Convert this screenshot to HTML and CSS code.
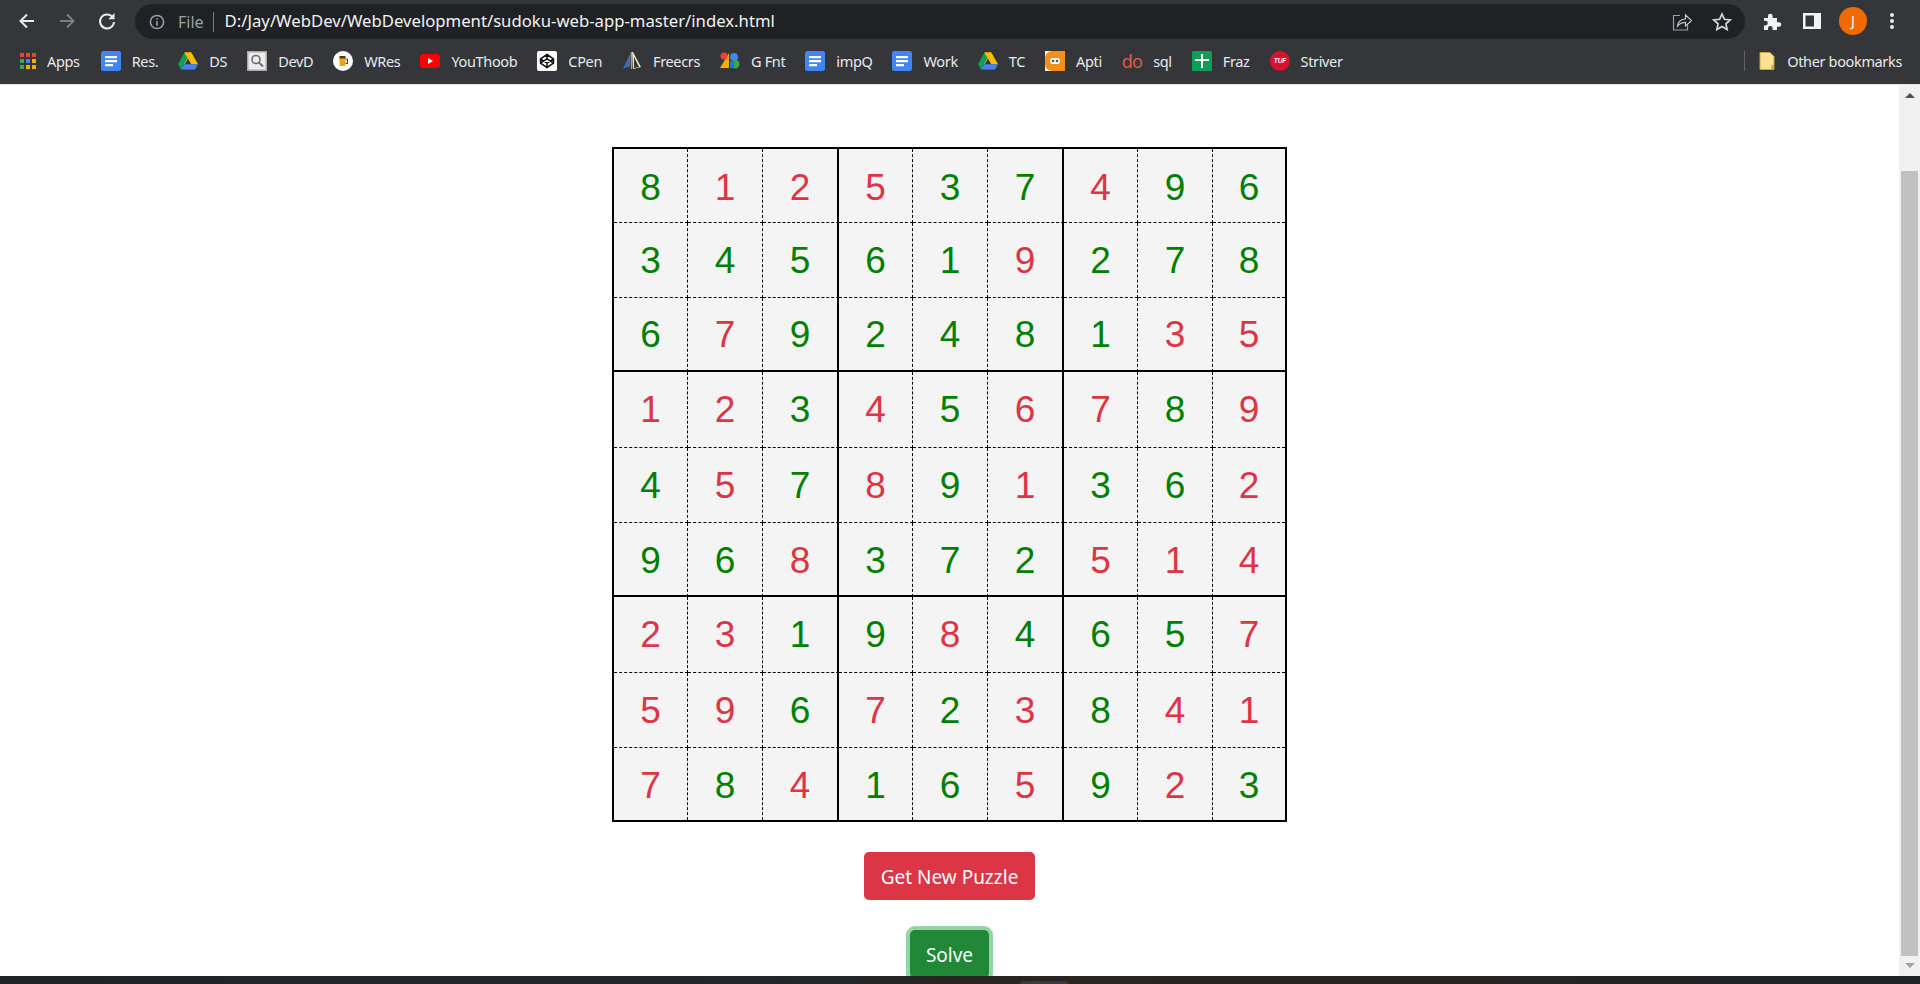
FILE: index.html
```html
<!doctype html>
<html lang="en">
  <head>
    <meta charset="utf-8">
    <meta name="viewport" content="width=device-width, initial-scale=1">
    <title>Sudoku</title>
    <link rel="stylesheet" href="styles.css">
  </head>
  <body>
    <svg class="defs" width="0" height="0">
      <symbol id="docs" viewBox="0 0 20 20">
        <rect width="20" height="20" rx="2.5" fill="#4285f4"/>
        <path d="M4 5h12v2.2H4zM4 9h12v2.2H4zM4 13h8v2.2H4z" fill="#fff"/>
      </symbol>
      <symbol id="drive" viewBox="0 0 20 20">
        <path d="M6.6 1.5h6.8l-3.4 6-3.4 6.2-3.3-0.1z" fill="#fbbc04"/>
        <path d="M6.6 1.5L0 13.2l3 5.3 6.6-11.5z" fill="#0f9d58"/>
        <path d="M13.4 1.5L20 13.2h-6.7L6.6 1.5z" fill="#fbbc04"/>
        <path d="M3 18.5h14l3-5.3H6.2z" fill="#4285f4"/>
      </symbol>
    </svg>

    <header class="chrome">
      <div class="nav-row">
        <svg class="nav-icon" viewBox="0 0 20 20"><path d="M17 10H4M10 3.5L3.5 10l6.5 6.5" fill="none" stroke="#e8eaed" stroke-width="2"/></svg>
        <svg class="nav-icon" viewBox="0 0 20 20"><path d="M3 10h13M10 3.5l6.5 6.5-6.5 6.5" fill="none" stroke="#7d7f83" stroke-width="2"/></svg>
        <svg class="nav-icon" viewBox="0 0 20 20"><path d="M15.6 6.2A7 7 0 1 0 17 11" fill="none" stroke="#e8eaed" stroke-width="2"/><path d="M17.5 2v6.2h-6.2z" fill="#e8eaed"/></svg>
        <div class="omnibox">
          <svg class="info-icon" viewBox="0 0 16 16"><circle cx="8" cy="8" r="6.6" fill="none" stroke="#9aa0a6" stroke-width="1.5"/><path d="M7.2 7h1.6v4.8H7.2zM7.2 4.2h1.6v1.6H7.2z" fill="#9aa0a6"/></svg>
          <span class="scheme">File</span>
          <span class="url">D:/Jay/WebDev/WebDevelopment/sudoku-web-app-master/index.html</span>
          <svg class="omni-icon share" viewBox="0 0 20 20"><path d="M8 3.5H1.5v14.5h14v-5" fill="none" stroke="#9aa0a6" stroke-width="1.2"/><path d="M5.5 14c.6-4 3.6-6.8 8-7V3l6 5.6-6 5.4v-3.600c-3.200 0-5.800 1-8 3.600z" fill="none" stroke="#c4c7ca" stroke-width="1.2"/></svg>
          <svg class="omni-icon" viewBox="0 0 20 20"><path d="M10 2l2.400 5.300 5.800.6-4.300 3.900 1.200 5.700L10 14.600l-5.100 2.900 1.200-5.700L1.800 7.900l5.800-.6z" fill="none" stroke="#d5d7d9" stroke-width="1.700"/></svg>
        </div>
        <svg class="tool-icon puzzle" viewBox="0 0 20 20"><path d="M2 7h4V5a2.300 2.300 0 0 1 4.600 0v2h4.400v4.200h2a2.300 2.300 0 0 1 0 4.600h-2V19h-4.400v-1.600a2.300 2.300 0 0 0-4.600 0V19H2v-4.600h1.500a2.300 2.300 0 0 0 0-4.600H2z" fill="#f1f3f4"/></svg>
        <svg class="tool-icon panel" viewBox="0 0 20 20"><path d="M1 2h18v16H1zM3.500 4.500v11H12v-11z" fill="#f1f3f4" fill-rule="evenodd"/></svg>
        <div class="avatar">J</div>
        <svg class="tool-icon menu" viewBox="0 0 6 20"><circle cx="3" cy="4" r="2" fill="#e8eaed"/><circle cx="3" cy="10" r="2" fill="#e8eaed"/><circle cx="3" cy="16" r="2" fill="#e8eaed"/></svg>
      </div>
      <nav class="bookmarks">
        <a class="bm"><svg class="apps" viewBox="0 0 16 16"><path d="M0 0h4v4H0zM6 0h4v4H6zM12 0h4v4h-4z" fill="#ea4335"/><path d="M0 6h4v4H0zM0 12h4v4H0z" fill="#34a853"/><path d="M6 6h4v4H6z" fill="#4285f4"/><path d="M12 6h4v4h-4zM6 12h4v4H6zM12 12h4v4h-4z" fill="#f9ab00"/></svg>Apps</a>
        <a class="bm"><svg><use href="#docs"/></svg>Res.</a>
        <a class="bm"><svg><use href="#drive"/></svg>DS</a>
        <a class="bm"><svg viewBox="0 0 20 20"><rect width="20" height="20" fill="#a9a9a9"/><rect x="1.500" y="1.500" width="17" height="17" fill="#ececec"/><circle cx="9" cy="8.500" r="4" fill="none" stroke="#6e6e6e" stroke-width="1.600"/><path d="M12 11.500l4 4" stroke="#6e6e6e" stroke-width="2"/></svg>DevD</a>
        <a class="bm"><svg viewBox="0 0 20 20"><circle cx="10" cy="10" r="10" fill="#fff"/><rect x="6.500" y="6" width="6" height="9" rx="1" fill="#e8a317"/><rect x="6.500" y="5" width="6" height="2.500" fill="#4b3a1a"/><path d="M12.500 8h2v4.500h-2" fill="none" stroke="#4b3a1a" stroke-width="1"/></svg>WRes</a>
        <a class="bm"><svg viewBox="0 0 20 20"><rect y="3" width="20" height="14" rx="3.500" fill="#f00"/><path d="M8 7l5 3-5 3z" fill="#fff"/></svg>YouThoob</a>
        <a class="bm"><svg viewBox="0 0 20 20"><rect width="20" height="20" rx="2" fill="#fff"/><path d="M10 3.500l6.500 4.300v4.400L10 16.500l-6.500-4.300V7.800zM3.500 7.800l6.500 4.300 6.500-4.300M3.500 12.200L10 7.900l6.500 4.300M10 3.500v4.400M10 12.100v4.400" fill="none" stroke="#111" stroke-width="1.500"/></svg>CPen</a>
        <a class="bm"><svg viewBox="0 0 20 20"><path d="M9 1L1 17.500l7-2z" fill="#3d6cb0"/><path d="M10 1l1 0 8 15-8 2z" fill="#e8e2c4"/><path d="M9.500 1v17" stroke="#e09a2b" stroke-width="1.200"/><path d="M12 6l5 10-5 1z" fill="#35363a"/></svg>Freecrs</a>
        <a class="bm gfont"><svg viewBox="0 0 20 20"><path d="M0 17L9 2v15z" fill="#f9ab00"/><circle cx="4" cy="5" r="3.500" fill="#ea4335"/><rect x="10" y="2" width="8" height="8" rx="4" fill="#4285f4"/><circle cx="15" cy="13" r="4.500" fill="#34a853"/><path d="M10 10h4v7h-4z" fill="#1a73e8"/></svg>G Fnt</a>
        <a class="bm"><svg><use href="#docs"/></svg>impQ</a>
        <a class="bm"><svg><use href="#docs"/></svg>Work</a>
        <a class="bm"><svg><use href="#drive"/></svg>TC</a>
        <a class="bm"><svg viewBox="0 0 20 20"><rect width="20" height="20" fill="#fff"/><path d="M20 0H7a7 7 0 0 0-7 7v6a7 7 0 0 0 7 7h13v-4H7a3 3 0 0 1-3-3V7a3 3 0 0 1 3-3h13z" fill="#f39019"/><rect x="3" y="3.500" width="17" height="13" fill="#f39019"/><rect x="5" y="7" width="10" height="6" rx="3" fill="#fff"/><circle cx="8" cy="10" r="1.300" fill="#555"/><circle cx="12" cy="10" r="1.300" fill="#555"/></svg>Apti</a>
        <a class="bm"><span class="do-mark">do</span>sql</a>
        <a class="bm"><svg viewBox="0 0 20 20"><rect width="20" height="20" rx="1.500" fill="#0f9d58"/><path d="M9 3h2v5h6v2h-6v7H9v-7H3V8h6z" fill="#fff"/></svg>Fraz</a>
        <a class="bm"><svg viewBox="0 0 20 20"><circle cx="10" cy="10" r="10" fill="#d9112c"/><text class="tuf" x="10" y="12.300">TUF</text></svg>Striver</a>
        <div class="bm-spacer"></div>
        <a class="bm other"><svg viewBox="0 0 16 20"><path d="M1 1.500h10l4 4v13H1z" fill="#fde293" stroke="#c9a73a"/><path d="M12.500 14h2.500v4.500h-2.500z" fill="#c9a73a"/></svg>Other bookmarks</a>
      </nav>
    </header>

    <div class="page">
      <main class="content">
        <div class="board">
          <div class="cell good">8</div><div class="cell bad">1</div><div class="cell bad">2</div><div class="cell bad">5</div><div class="cell good">3</div><div class="cell good">7</div><div class="cell bad">4</div><div class="cell good">9</div><div class="cell good">6</div>
          <div class="cell good">3</div><div class="cell good">4</div><div class="cell good">5</div><div class="cell good">6</div><div class="cell good">1</div><div class="cell bad">9</div><div class="cell good">2</div><div class="cell good">7</div><div class="cell good">8</div>
          <div class="cell good">6</div><div class="cell bad">7</div><div class="cell good">9</div><div class="cell good">2</div><div class="cell good">4</div><div class="cell good">8</div><div class="cell good">1</div><div class="cell bad">3</div><div class="cell bad">5</div>
          <div class="cell bad">1</div><div class="cell bad">2</div><div class="cell good">3</div><div class="cell bad">4</div><div class="cell good">5</div><div class="cell bad">6</div><div class="cell bad">7</div><div class="cell good">8</div><div class="cell bad">9</div>
          <div class="cell good">4</div><div class="cell bad">5</div><div class="cell good">7</div><div class="cell bad">8</div><div class="cell good">9</div><div class="cell bad">1</div><div class="cell good">3</div><div class="cell good">6</div><div class="cell bad">2</div>
          <div class="cell good">9</div><div class="cell good">6</div><div class="cell bad">8</div><div class="cell good">3</div><div class="cell good">7</div><div class="cell good">2</div><div class="cell bad">5</div><div class="cell bad">1</div><div class="cell bad">4</div>
          <div class="cell bad">2</div><div class="cell bad">3</div><div class="cell good">1</div><div class="cell good">9</div><div class="cell bad">8</div><div class="cell good">4</div><div class="cell good">6</div><div class="cell good">5</div><div class="cell bad">7</div>
          <div class="cell bad">5</div><div class="cell bad">9</div><div class="cell good">6</div><div class="cell bad">7</div><div class="cell good">2</div><div class="cell bad">3</div><div class="cell good">8</div><div class="cell bad">4</div><div class="cell bad">1</div>
          <div class="cell bad">7</div><div class="cell good">8</div><div class="cell bad">4</div><div class="cell good">1</div><div class="cell good">6</div><div class="cell bad">5</div><div class="cell good">9</div><div class="cell bad">2</div><div class="cell good">3</div>
        </div>
        <button type="button" class="btn btn-new">Get New Puzzle</button>
        <button type="button" class="btn btn-solve">Solve</button>
      </main>
      <div class="scrollbar">
        <span class="arrow-up"></span>
        <div class="thumb"></div>
        <span class="arrow-down"></span>
      </div>
    </div>
    <div class="taskbar"><span class="task-tab"></span></div>
  </body>
</html>
```

FILE: styles.css
```css
html,body{
    margin:0;
    height:100%;
    overflow:hidden;
    background-color:white;
}
body{
    display:flex;
    flex-direction:column;
    font-family:"Noto Sans","Open Sans",Arial,sans-serif;
}
.defs{
    display:block;
    height:0;
}

/* browser toolbar */
.chrome{
    height:84px;
    flex:none;
    background-color:#35363a;
    color:#e8eaed;
}
.nav-row{
    height:41px;
    display:flex;
    align-items:flex-start;
    padding-top:4px;
    box-sizing:border-box;
}
.nav-icon{
    width:20px;
    height:20px;
    margin:7px 0 0 17px;
    flex:none;
}
.nav-icon + .nav-icon{
    margin-left:20px;
}
.omnibox{
    width:1610px;
    height:35px;
    margin-left:18px;
    flex:none;
    display:flex;
    align-items:center;
    background-color:#202124;
    border-radius:18px;
    padding:0 13px 0 14px;
    box-sizing:border-box;
}
.info-icon{
    width:16px;
    height:16px;
    flex:none;
}
.scheme{
    margin-left:13px;
    padding-right:9px;
    border-right:1px solid #7d7f83;
    font-size:16px;
    line-height:20px;
    color:#9aa0a6;
}
.url{
    margin-left:11px;
    margin-top:-2px;
    font-size:16.700px;
    color:#f1f3f4;
    flex:1;
    white-space:nowrap;
}
.omni-icon{
    width:20px;
    height:20px;
    margin-left:20px;
    flex:none;
}
.tool-icon{
    flex:none;
    width:20px;
    height:20px;
    margin-top:7px;
}
.puzzle{
    margin-left:17px;
}
.panel{
    margin-left:20px;
}
.avatar{
    width:28px;
    height:28px;
    margin:3px 0 0 17px;
    flex:none;
    border-radius:50%;
    background-color:#f06a00;
    color:#fff;
    font-size:14px;
    line-height:28px;
    text-align:center;
}
.menu{
    width:6px;
    margin-left:22px;
}

/* bookmarks */
.bookmarks{
    height:39px;
    display:flex;
    align-items:center;
    padding:0 18px 0 20px;
    box-sizing:border-box;
    font-size:14.500px;
    letter-spacing:-.35px;
    white-space:nowrap;
}
.bm{
    display:flex;
    align-items:center;
    gap:11px;
    margin-right:20px;
}
.bm:first-child{
    margin-right:21px;
}
.bm svg{
    width:20px;
    height:20px;
    flex:none;
}
.bm .apps{
    width:16px;
    height:16px;
}
.tuf{
    font-family:"Liberation Sans",Arial,sans-serif;
    font-size:6.500px;
    font-weight:700;
    font-style:italic;
    letter-spacing:0;
    text-anchor:middle;
    fill:#fff;
}
.do-mark{
    color:#e2574c;
    font-size:18px;
    letter-spacing:-.8px;
    line-height:20px;
}
.bm-spacer{
    flex:1;
}
.other{
    margin-right:0;
    border-left:1px solid #5f6368;
    padding-left:14px;
    height:20px;
    gap:12px;
}
.other svg{
    width:16px;
}

/* page */
.page{
    flex:1;
    min-height:0;
    display:flex;
    border-top:1px solid #e8e8e8;
}
.content{
    flex:1;
    min-width:0;
    overflow:hidden;
    display:flex;
    flex-direction:column;
    align-items:center;
    padding-top:62px;
}
.board{
    flex:none;
    display:grid;
    grid-template-columns:74px 75px 76px 74px 75px 76px 74px 75px 72px;
    grid-template-rows:74px 75px 74px 76px 75px 74px 76px 75px 72px;
    border:2px solid black;
    font-family:"Liberation Sans",Arial,sans-serif;
    font-size:37px;
}
.cell{
    display:flex;
    justify-content:center;
    align-items:center;
    box-sizing:border-box;
    padding-top:2px;
    background-color:#f4f4f4;
    border-right:1px dashed black;
    border-bottom:1px dashed black;
}
.cell:nth-child(9n+3),.cell:nth-child(9n+6){
    border-right:2px solid black;
}
.cell:nth-child(9n){
    border-right:none;
}
.cell:nth-child(n+19):nth-child(-n+27),.cell:nth-child(n+46):nth-child(-n+54){
    border-bottom:2px solid black;
}
.cell:nth-child(n+73){
    border-bottom:none;
    padding-top:4px;
}
.cell:nth-child(-n+9),.cell:nth-child(n+46):nth-child(-n+54){
    padding-top:4px;
}
.cell:nth-child(n+28):nth-child(-n+36),.cell:nth-child(n+55):nth-child(-n+63){
    padding-top:0;
}
.good{
    color:green;
}
.bad{
    color:#dc3545;
}
.btn{
    flex:none;
    height:48px;
    margin-top:30px;
    padding:2px 17px 0;
    border:none;
    border-radius:5px;
    color:white;
    font-family:inherit;
    font-size:19px;
}
.btn-new{
    background-color:#dc3545;
}
.btn-solve{
    padding:2px 16px 0;
    background-color:#218838;
    box-shadow:0 0 0 4px #95d3a4;
}

/* scrollbar */
.scrollbar{
    width:21px;
    flex:none;
    background-color:#f1f1f1;
    display:flex;
    flex-direction:column;
    align-items:center;
    position:relative;
}
.arrow-up{
    margin-top:8px;
    border-left:5px solid transparent;
    border-right:5px solid transparent;
    border-bottom:5px solid #505050;
}
.thumb{
    width:17px;
    height:785px;
    margin-top:73px;
    background-color:#c1c1c1;
}
.arrow-down{
    margin-top:7px;
    border-left:5px solid transparent;
    border-right:5px solid transparent;
    border-top:5px solid #a3a3a3;
}
.taskbar{
    height:8px;
    flex:none;
    background:linear-gradient(90deg,#1f2326 0,#23262a 40%,#2a2521 55%,#202225 100%);
    position:relative;
}
.task-tab{
    position:absolute;
    left:1020px;
    top:5px;
    width:48px;
    height:3px;
    border-radius:3px 3px 0 0;
    background-color:#3a3b3d;
}
```
